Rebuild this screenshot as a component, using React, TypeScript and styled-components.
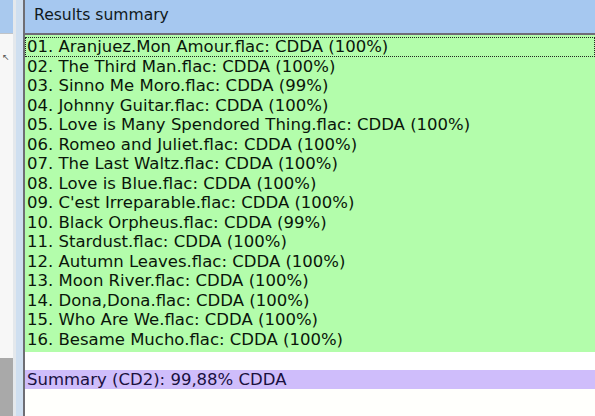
import styled, { createGlobalStyle } from "styled-components";

const GlobalStyle = createGlobalStyle`
  html, body { margin: 0; padding: 0; background: #ffffff; }
  body { width: 595px; height: 416px; overflow: hidden; }
`;

const tracks = [
  "01. Aranjuez.Mon Amour.flac: CDDA (100%)",
  "02. The Third Man.flac: CDDA (100%)",
  "03. Sinno Me Moro.flac: CDDA (99%)",
  "04. Johnny Guitar.flac: CDDA (100%)",
  "05. Love is Many Spendored Thing.flac: CDDA (100%)",
  "06. Romeo and Juliet.flac: CDDA (100%)",
  "07. The Last Waltz.flac: CDDA (100%)",
  "08. Love is Blue.flac: CDDA (100%)",
  "09. C'est Irreparable.flac: CDDA (100%)",
  "10. Black Orpheus.flac: CDDA (99%)",
  "11. Stardust.flac: CDDA (100%)",
  "12. Autumn Leaves.flac: CDDA (100%)",
  "13. Moon River.flac: CDDA (100%)",
  "14. Dona,Dona.flac: CDDA (100%)",
  "15. Who Are We.flac: CDDA (100%)",
  "16. Besame Mucho.flac: CDDA (100%)",
];

const Window = styled.div`
  display: flex;
  width: 595px;
  height: 416px;
  font-family: "DejaVu Sans", Verdana, sans-serif;
`;

const SideStrip = styled.div`
  width: 13px;
  display: flex;
  flex-direction: column;
  background: #f7f7f7;
`;

const SideHeader = styled.div`
  height: 33px;
  background: #a9c9ee;
  border-bottom: 1px solid #c0c4c8;
`;

const SideBody = styled.div`
  flex: 1;
  position: relative;
`;

const SideGlyph = styled.span`
  position: absolute;
  left: 2px;
  top: 18px;
  font-size: 9px;
  color: #555;
`;

const SideGrey = styled.div`
  height: 58px;
  background: #a9a9a9;
`;

const Splitter = styled.div`
  width: 10px;
  display: flex;
`;

const SplitLight = styled.div`
  width: 3px;
  background: #e4e8ec;
`;

const SplitBlue = styled.div`
  flex: 1;
  background: #cfdff0;
`;

const Panel = styled.div`
  flex: 1;
  display: flex;
  flex-direction: column;
  border-left: 2px solid #6e6e74;
`;

const PanelHeader = styled.div`
  height: 29px;
  padding: 0 0 4px 9px;
  background: #a6c8f0;
  display: flex;
  align-items: center;
  font-size: 15.6px;
  color: #101820;
  border-bottom: 2px solid #6f6c78;
`;

const List = styled.div`
  display: flex;
  flex-direction: column;
  background: #b3fdab;
  padding-top: 2px;
  padding-bottom: 3px;
`;

const Row = styled.div<{ $focused?: boolean }>`
  height: 19.5px;
  line-height: 18px;
  padding-left: 1px;
  font-size: 16.5px;
  color: #0a160a;
  white-space: nowrap;
  box-sizing: border-box;
  border: 1px dotted ${(p) => (p.$focused ? "#202820" : "transparent")};
`;

const Gap = styled.div`
  height: 18px;
  background: #ffffff;
`;

const SummaryRow = styled.div`
  height: 19px;
  line-height: 19px;
  background: #cfbdfb;
  padding-left: 2px;
  font-size: 16.5px;
  color: #1a1040;
  white-space: nowrap;
`;

const Rest = styled.div`
  flex: 1;
  background: #fffffc;
`;

export default function App() {
  return (
    <>
      <GlobalStyle />
      <Window>
        <SideStrip>
          <SideHeader />
          <SideBody>
            <SideGlyph>↖</SideGlyph>
          </SideBody>
          <SideGrey />
        </SideStrip>
        <Splitter>
          <SplitLight />
          <SplitBlue />
        </Splitter>
        <Panel>
          <PanelHeader>Results summary</PanelHeader>
          <List>
            {tracks.map((t, i) => (
              <Row key={t} $focused={i === 0}>
                {t}
              </Row>
            ))}
          </List>
          <Gap />
          <SummaryRow>Summary (CD2): 99,88% CDDA</SummaryRow>
          <Rest />
        </Panel>
      </Window>
    </>
  );
}
